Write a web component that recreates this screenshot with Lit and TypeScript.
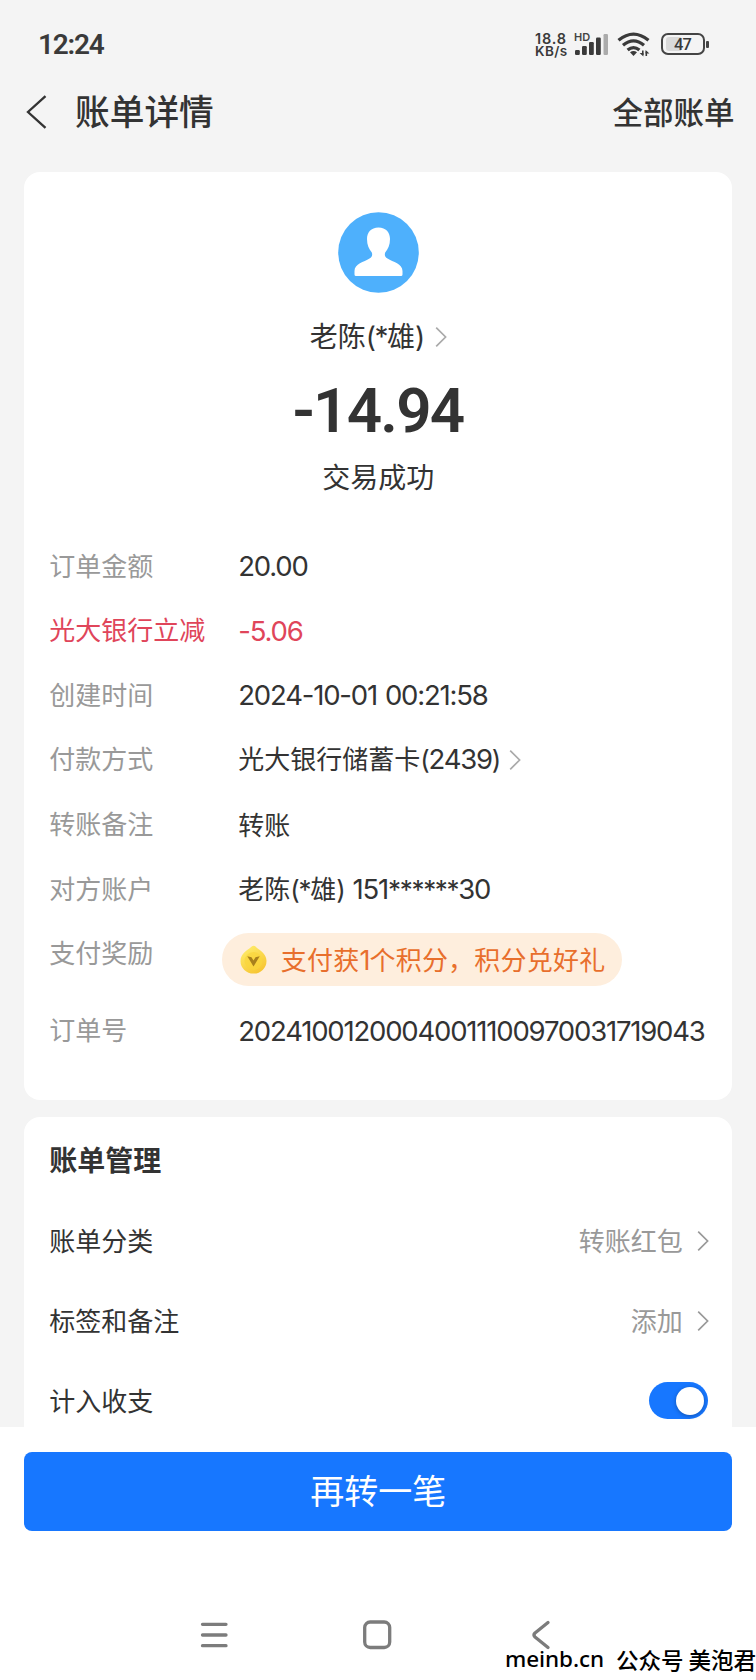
import { LitElement, html, css, svg } from "lit";
import { customElement, property } from "lit/decorators.js";

const runs = (text: string) =>
  text
    .split(/([()*]+|[\x20-\x27\x2b-\x7e]+)/)
    .filter((part) => part.length > 0)
    .map((part) => {
      if (/^[()*]+$/.test(part)) return html`<span class="num sym">${part}</span>`;
      return /^[\x20-\x7e]+$/.test(part) ? html`<span class="num">${part}</span>` : part;
    });

const chevron = html`<svg class="chev" width="12" height="22" viewBox="0 0 12 22">
  <path d="M1.2 1.6 L10.6 11 L1.2 20.4" fill="none" stroke="currentColor" stroke-width="1.7" />
</svg>`;

@customElement("status-bar")
class StatusBar extends LitElement {
  static styles = css`
    :host {
      display: flex;
      justify-content: space-between;
      height: 88px;
      padding: 0 47.5px 0 38px;
      font-family: Inter, sans-serif;
      color: #3a3a3a;
    }
    .clock {
      font-family: Roboto, sans-serif;
      font-size: 28px;
      font-weight: 600;
      line-height: 89px;
      letter-spacing: -1.2px;
    }
    .right {
      display: flex;
      align-items: flex-start;
      padding-top: 32px;
    }
    .speed {
      width: 38.5px;
      font-size: 14.5px;
      line-height: 13px;
      font-weight: 600;
      white-space: nowrap;
      letter-spacing: 0.8px;
    }
    .speed div + div {
      font-size: 13.5px;
      letter-spacing: 0.4px;
    }
    .glyphs {
      display: block;
      overflow: visible;
    }
    .battery {
      display: flex;
      align-items: center;
      margin-top: 1px;
    }
    .cell {
      box-sizing: border-box;
      width: 44px;
      height: 22px;
      border: 2px solid #444;
      border-radius: 7px;
      padding: 2px 3px;
      display: flex;
    }
    .level {
      width: 36px;
      border-radius: 3px;
      background: linear-gradient(90deg, #d9d9d9 44%, transparent 44%);
      font-family: Roboto, sans-serif;
      font-size: 16.5px;
      font-weight: 500;
      line-height: 15px;
      text-align: center;
      letter-spacing: -0.8px;
    }
    .nub {
      width: 3px;
      height: 7px;
      margin-left: 1px;
      border-radius: 1px;
      background: #444;
    }
  `;
  render() {
    const bars = [
      [1, 18, 5],
      [8, 14, 9],
      [15, 10, 13],
      [22, 5.5, 17.5],
    ];
    return html`
      <div class="clock">12:24</div>
      <div class="right">
        <div class="speed"><div>18.8</div><div>KB/s</div></div>
        <svg class="glyphs" width="87" height="26" viewBox="0 0 87 26">
          <text x="0" y="9.4" font-size="11" font-weight="600" fill="#444">HD</text>
          ${bars.map(([x, y, h]) => svg`<rect x=${x} y=${y} width="4.8" height=${h} rx="1.2" fill="#3a3a3a" />`)}
          <rect x="29.5" y="2" width="4.5" height="21" rx="1.2" fill="#ababab" />
          <g fill="none" stroke="#3a3a3a" stroke-width="3.3">
            <path d="M44.5 8.2 Q59.5 -4 74.5 8.2" />
            <path d="M49 13.2 Q59.5 4.6 70 13.2" />
            <path d="M53.6 18 Q59.5 13.2 65.4 18" />
          </g>
          <path d="M56 20.2 Q59.5 17.6 63 20.2 L59.5 24 Z" fill="#3a3a3a" />
          <path d="M68.8 18.5 V23 M72.3 24 V19.5" stroke="#3a3a3a" stroke-width="1.6" />
          <path d="M65.6 21 H69.4 V24.4 Z M71.6 18 L75.4 21.6 H71.6 Z" fill="#3a3a3a" />
        </svg>
        <div class="battery">
          <div class="cell"><div class="level">47</div></div>
          <div class="nub"></div>
        </div>
      </div>
    `;
  }
}

@customElement("detail-row")
class DetailRow extends LitElement {
  @property() label = "";
  @property() value = "";
  @property({ type: Boolean }) red = false;
  @property({ type: Boolean }) link = false;
  static styles = css`
    :host {
      display: flex;
      height: 64.6px;
      line-height: 62px;
      font-size: 26px;
      color: #333;
      white-space: nowrap;
    }
    :host([red]) {
      color: #e0455a;
    }
    .label {
      width: 189px;
      flex: none;
      color: #999;
    }
    :host([red]) .label {
      color: inherit;
    }
    .num {
      font-family: Inter, sans-serif;
      font-size: 27.5px;
      letter-spacing: -1.2px;
      word-spacing: 1.5px;
    }
    .num.sym {
      font-size: 26px;
      letter-spacing: -1.3px;
    }
    .value {
      display: flex;
      align-items: center;
      white-space: pre;
      height: 64px;
    }
    .chev {
      color: #aaa;
      margin: 2px 0 0 9px;
    }
  `;
  render() {
    return html`<div class="label">${this.label}</div>
      <div class="value"><span>${runs(this.value)}</span>${this.link ? chevron : ""}<slot></slot></div>`;
  }
}

@customElement("app-root")
class AppRoot extends LitElement {
  static styles = css`
    :host {
      display: flex;
      flex-direction: column;
      width: 756px;
      height: 1680px;
      overflow: hidden;
      position: relative;
      background: #f4f4f4;
      color: #333;
      font-family: "Noto Sans CJK SC", sans-serif;
      font-size: 26px;
      white-space: nowrap;
    }
    .head {
      display: flex;
      align-items: center;
      height: 48px;
      padding: 0 21.5px 0 26px;
      margin-bottom: 36px;
    }
    .head svg {
      margin-right: 28px;
    }
    .title {
      flex: 1;
      font-size: 34.7px;
      font-weight: 500;
      line-height: 44px;
      margin-top: -4px;
    }
    .all {
      font-size: 30.5px;
      font-weight: 500;
      line-height: 44px;
      margin-top: -2px;
    }
    .card {
      box-sizing: border-box;
      flex: none;
      width: 708px;
      margin-left: 24.3px;
      border-radius: 16px;
      background: #fff;
    }
    .bill {
      height: 928px;
      padding: 40px 25px 0;
      margin-bottom: 17px;
    }
    .payee {
      display: flex;
      flex-direction: column;
      align-items: center;
      height: 321.7px;
    }
    .avatar {
      display: block;
    }
    .name {
      display: flex;
      align-items: center;
      font-size: 28px;
      line-height: 40px;
      margin-top: 22px;
    }
    .name .num {
      font-family: Inter, sans-serif;
      font-size: 28px;
      letter-spacing: -1.5px;
    }
    .chev {
      color: #aaa;
      margin: 2px 0 0 11px;
    }
    .amount {
      font-family: Roboto, sans-serif;
      font-weight: 600;
      font-size: 62px;
      line-height: 72px;
      letter-spacing: -1.8px;
      margin: 18px 0 0 -1px;
    }
    .state {
      font-size: 28px;
      line-height: 40px;
      margin-top: 9px;
    }
    .pillrow {
      height: 77px;
    }
    .pill {
      display: flex;
      align-items: center;
      width: 399.5px;
      height: 53px;
      border-radius: 27px;
      margin: 13px 0 0 -16px;
      padding-left: 18px;
      box-sizing: border-box;
      background: #feeedd;
      color: #e86f2c;
      line-height: 50px;
    }
    .pill svg {
      margin: 0 13.5px 0 0;
    }
    .pill > span {
      letter-spacing: 0.22px;
    }
    .pill span span {
      font-family: Inter, sans-serif;
      font-size: 27px;
      letter-spacing: -1px;
    }
    .manage {
      height: 310px;
      padding: 16px 24px 0 25px;
      border-radius: 16px 16px 0 0;
    }
    .heading {
      font-size: 28px;
      font-weight: 700;
      line-height: 52px;
      height: 67px;
    }
    .item {
      display: flex;
      align-items: center;
      height: 80px;
      line-height: 76px;
    }
    .item .name2 {
      flex: 1;
    }
    .item .val {
      color: #999;
    }
    .item .chev {
      color: #999;
      margin: 2px -0.5px 0 14px;
    }
    .toggle {
      box-sizing: border-box;
      width: 59px;
      height: 37px;
      border-radius: 19px;
      background: #1777ff;
      padding: 4.5px;
      display: flex;
      justify-content: flex-end;
      margin-top: 1px;
    }
    .knob {
      width: 28px;
      height: 28px;
      border-radius: 50%;
      background: #fff;
      box-shadow: 0 1px 4px rgba(0, 0, 0, 0.3);
    }
    .foot {
      flex: 1;
      background: #fff;
      padding: 25px 23.7px 0 24.3px;
    }
    .again {
      height: 79px;
      border-radius: 8px;
      background: #1777ff;
      color: #fff;
      text-align: center;
      font-size: 34px;
      line-height: 75px;
    }
    .nav {
      display: flex;
      margin-top: 89px;
      padding-left: 175px;
    }
    .mark {
      position: absolute;
      right: 0;
      top: 1643px;
      font-size: 22.5px;
      font-weight: 500;
      line-height: 32px;
      color: #000;
      display: flex;
      gap: 12px;
    }
    .mark .site {
      font-family: "Noto Sans", sans-serif;
      font-size: 22.5px;
      letter-spacing: -0.1px;
    }
  `;
  render() {
    return html`
      <status-bar></status-bar>
      <div class="head">
        <svg width="21" height="34" viewBox="0 0 21 34">
          <path d="M19.5 1.2 L2 17 L19.5 32.8" fill="none" stroke="#333" stroke-width="2.3" />
        </svg>
        <div class="title">账单详情</div>
        <div class="all">全部账单</div>
      </div>
      <div class="card bill">
        <div class="payee">
          <svg class="avatar" width="81" height="81" viewBox="0 0 81 81">
            <circle cx="40.5" cy="40.5" r="40.3" fill="#4eb0fc" />
            <path
              d="M40.5 15.5 C48 15.5 52 20.5 52 27 C52 33 50 37 47.2 40.5 C46.3 43 47 45 49.5 46.5 C55 50 64.5 51.5 64.5 59 V62.5 Q64.5 64 63 64 H18 Q16.5 64 16.5 62.5 V59 C16.5 51.5 26 50 31.5 46.5 C34 45 34.7 43 33.8 40.5 C31 37 29 33 29 27 C29 20.5 33 15.5 40.5 15.5 Z"
              fill="#fff"
            />
          </svg>
          <div class="name"><span>${runs("老陈(*雄)")}</span>${chevron}</div>
          <div class="amount">-14.94</div>
          <div class="state">交易成功</div>
        </div>
        <detail-row label="订单金额" value="20.00"></detail-row>
        <detail-row red label="光大银行立减" value="-5.06"></detail-row>
        <detail-row label="创建时间" value="2024-10-01 00:21:58"></detail-row>
        <detail-row link label="付款方式" value="光大银行储蓄卡(2439)"></detail-row>
        <detail-row label="转账备注" value="转账"></detail-row>
        <detail-row label="对方账户" value="老陈(*雄) 151******30"></detail-row>
        <detail-row class="pillrow" label="支付奖励">
          <div class="pill">
            <svg width="27" height="29" viewBox="0 0 27 29">
              <defs>
                <linearGradient id="coin" x1="0" y1="0" x2="0.6" y2="1">
                  <stop offset="0" stop-color="#fff170" />
                  <stop offset="1" stop-color="#f7c634" />
                </linearGradient>
              </defs>
              <path
                d="M13.5 0.8 Q15 0.8 16.5 2.6 C19 5 26.5 8.5 26.5 16 A13 12.6 0 0 1 0.5 16 C0.5 8.5 8 5 10.5 2.6 Q12 0.8 13.5 0.8 Z"
                fill="url(#coin)"
              />
              <circle cx="13.5" cy="16" r="9" fill="#f9d53c" opacity="0.7" />
              <path d="M7.3 11.3 L11.5 12.3 L13.5 15.5 L15.5 12.3 L19.7 11.3 L13.5 21.5 Z" fill="#a8801c" />
            </svg>
            <span>支付获<span>1</span>个积分，积分兑好礼</span>
          </div>
        </detail-row>
        <detail-row label="订单号" value="20241001200040011100970031719043"></detail-row>
      </div>
      <div class="card manage">
        <div class="heading">账单管理</div>
        <div class="item"><span class="name2">账单分类</span><span class="val">转账红包</span>${chevron}</div>
        <div class="item"><span class="name2">标签和备注</span><span class="val">添加</span>${chevron}</div>
        <div class="item">
          <span class="name2">计入收支</span>
          <div class="toggle"><div class="knob"></div></div>
        </div>
      </div>
      <div class="foot">
        <div class="again">再转一笔</div>
        <div class="nav">
          <svg width="352" height="30" viewBox="0 0 352 30" fill="none" stroke="#7c7c7c" stroke-width="3.3" stroke-linecap="round" stroke-linejoin="round">
            <path d="M3.5 4.3 H27 M3.5 15 H27 M3.5 25.7 H27" />
            <rect x="165.7" y="2" width="25" height="25.5" rx="5.5" />
            <path d="M349 2.5 L336 13 Q334 15 336 17 L349 27.5" />
          </svg>
        </div>
      </div>
      <div class="mark"><span class="site">meinb.cn</span><span>公众号 美泡君</span></div>
    `;
  }
}
